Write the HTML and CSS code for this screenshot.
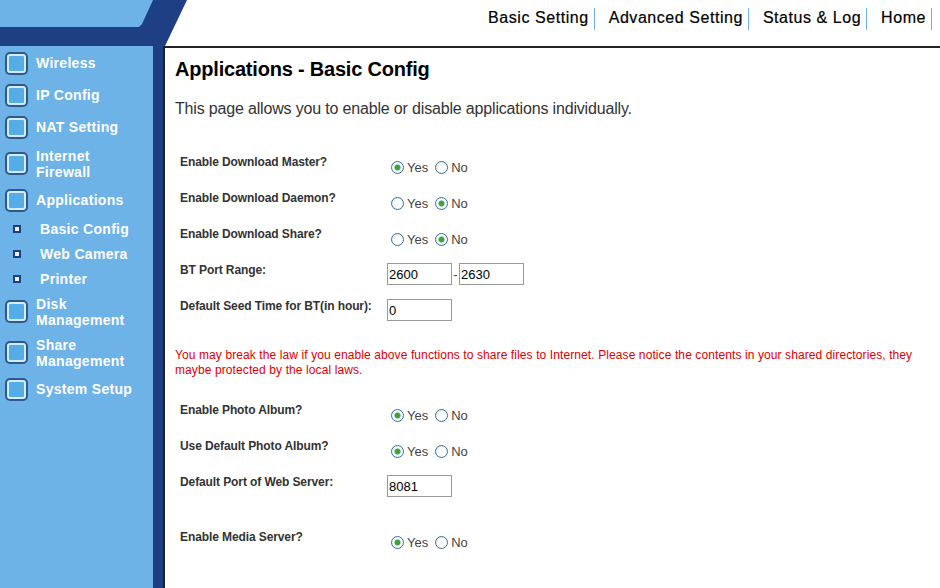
FILE: index.html
```html
<!DOCTYPE html>
<html lang="en">
<head>
    <title>Applications - Basic Config</title>
    <meta http-equiv="content-type" content="text/html;charset=UTF-8" />
    <link rel="stylesheet" href="styles.css">
</head>
<body>
    <div class="top-bar">
        <svg class="top-logo" width="187" height="46" viewBox="0 0 187 46">
            <polygon points="0,0 187,0 165,46 0,46" fill="#1f3f85"/>
            <polygon points="0,0 153,0 142,24 139,27 0,27" fill="#6db3e8"/>
        </svg>
        <ul class="top-menu">
            <li>Basic Setting</li>
            <li>Advanced Setting</li>
            <li>Status &amp; Log</li>
            <li>Home</li>
        </ul>
    </div>
    <div class="page">
        <div class="side-strip">
            <ul class="side-menu">
                <li class="side-item"><span class="side-icon"></span><span>Wireless</span></li>
                <li class="side-item"><span class="side-icon"></span><span>IP Config</span></li>
                <li class="side-item"><span class="side-icon"></span><span>NAT Setting</span></li>
                <li class="side-item tall"><span class="side-icon"></span><span>Internet<br>Firewall</span></li>
                <li class="side-item"><span class="side-icon"></span><span>Applications</span></li>
                <li class="side-sub"><span class="side-bullet"></span><span>Basic Config</span></li>
                <li class="side-sub"><span class="side-bullet"></span><span>Web Camera</span></li>
                <li class="side-sub"><span class="side-bullet"></span><span>Printer</span></li>
                <li class="side-item tall"><span class="side-icon"></span><span>Disk<br>Management</span></li>
                <li class="side-item tall"><span class="side-icon"></span><span>Share<br>Management</span></li>
                <li class="side-item"><span class="side-icon"></span><span>System Setup</span></li>
            </ul>
        </div>
        <div class="content">
            <h1>Applications - Basic Config</h1>
            <p class="intro">This page allows you to enable or disable applications individually.</p>

            <div class="form-group first-group">
                <div class="form-row">
                    <label>Enable Download Master?</label>
                    <div class="field"><input type="radio" name="dm" checked><span>Yes</span><input type="radio" name="dm"><span>No</span></div>
                </div>
                <div class="form-row">
                    <label>Enable Download Daemon?</label>
                    <div class="field"><input type="radio" name="dd"><span>Yes</span><input type="radio" name="dd" checked><span>No</span></div>
                </div>
                <div class="form-row">
                    <label>Enable Download Share?</label>
                    <div class="field"><input type="radio" name="ds"><span>Yes</span><input type="radio" name="ds" checked><span>No</span></div>
                </div>
                <div class="form-row">
                    <label>BT Port Range:</label>
                    <div class="field text-field"><input type="text" value="2600"><span class="dash">-</span><input type="text" value="2630"></div>
                </div>
                <div class="form-row">
                    <label>Default Seed Time for BT(in hour):</label>
                    <div class="field text-field"><input type="text" value="0"></div>
                </div>
            </div>

            <p class="warning">You may break the law if you enable above functions to share files to Internet. Please notice the contents in your shared directories, they maybe protected by the local laws.</p>

            <div class="form-group">
                <div class="form-row">
                    <label>Enable Photo Album?</label>
                    <div class="field"><input type="radio" name="pa" checked><span>Yes</span><input type="radio" name="pa"><span>No</span></div>
                </div>
                <div class="form-row">
                    <label>Use Default Photo Album?</label>
                    <div class="field"><input type="radio" name="up" checked><span>Yes</span><input type="radio" name="up"><span>No</span></div>
                </div>
                <div class="form-row">
                    <label>Default Port of Web Server:</label>
                    <div class="field text-field"><input type="text" value="8081"></div>
                </div>
                <div class="form-row media-row">
                    <label>Enable Media Server?</label>
                    <div class="field"><input type="radio" name="ms" checked><span>Yes</span><input type="radio" name="ms"><span>No</span></div>
                </div>
            </div>
        </div>
    </div>
</body>
</html>
```

FILE: styles.css
```css
html, body {
    margin: 0;
    height: 100%;
    overflow: hidden;
}

body {
    font-family: "Liberation Sans", Arial, sans-serif;
    background: #fff;
    color: #333;
}

ul {
    list-style: none;
    margin: 0;
    padding: 0;
}

.top-bar {
    height: 46px;
    display: flex;
    justify-content: space-between;
}

.top-logo {
    display: block;
}

.top-menu {
    display: flex;
    align-items: flex-start;
    padding-top: 8px;
    padding-right: 8px;
}

.top-menu li {
    height: 22px;
    line-height: 19px;
    font-size: 16px;
    color: #000;
    letter-spacing: 0.55px;
    -webkit-text-stroke: 0.2px #000;
    padding: 0 5px 0 14px;
    border-right: 1px solid #6db3e8;
}

.page {
    display: flex;
    height: 542px;
}

.side-strip {
    width: 153px;
    background: #6db3e8;
    border-right: 10px solid #1f3f85;
    flex-shrink: 0;
}

.side-menu {
    color: #fff;
    font-size: 14px;
    font-weight: bold;
    letter-spacing: 0.3px;
    padding-top: 1px;
}

.side-item {
    display: flex;
    align-items: center;
    min-height: 32px;
    line-height: 16px;
    padding-left: 5px;
}

.side-item.tall {
    min-height: 41px;
}

.side-icon {
    width: 15px;
    height: 15px;
    margin-left: 2px;
    margin-right: 10px;
    flex-shrink: 0;
    background: #55ade8;
    border: 2px solid #d5ecfa;
    border-radius: 3px;
    box-shadow: 0 0 0 2px #2a5a90;
}

.side-sub {
    display: flex;
    align-items: center;
    height: 25px;
    padding-left: 13px;
}

.side-bullet {
    width: 4px;
    height: 4px;
    margin-right: 19px;
    background: #e8f4fc;
    border: 2px solid #1f3f85;
    flex-shrink: 0;
}

.content {
    flex: 1;
    border-top: 2px solid #222;
    border-left: 2px solid #222;
    padding: 0 10px;
}

h1 {
    margin: 10px 0 0 0;
    font-size: 20px;
    line-height: 23px;
    letter-spacing: -0.2px;
    color: #000;
}

.intro {
    margin: 18px 0 0 0;
    font-size: 16px;
    line-height: 20px;
    letter-spacing: -0.17px;
}

.first-group {
    margin-top: 26px;
}

.form-row {
    display: flex;
    height: 36px;
    padding-left: 5px;
}

.form-row label {
    width: 207px;
    flex-shrink: 0;
    font-size: 12px;
    font-weight: bold;
    line-height: 16px;
    letter-spacing: -0.1px;
    padding-top: 9px;
}

.field {
    display: flex;
    align-items: center;
    height: 20px;
    padding-top: 12px;
    padding-left: 4px;
    font-size: 13px;
    color: #444;
}

.field input[type="radio"] {
    appearance: none;
    -webkit-appearance: none;
    width: 13px;
    height: 13px;
    margin: 0 3px 0 0;
    border: 1px solid #3a6f9e;
    border-radius: 50%;
    background: radial-gradient(circle at 60% 60%, #fff 40%, #dcdcd4 100%);
}

.field input[type="radio"]:checked {
    background: radial-gradient(circle, #3aa53a 0, #3aa53a 2.5px, #fff 3.5px, #eee 100%);
}

.field span {
    margin-right: 7px;
}

.text-field {
    padding-top: 10px;
    padding-left: 0;
    height: 22px;
}

.text-field input {
    box-sizing: border-box;
    width: 65px;
    height: 22px;
    margin: 0;
    padding: 0 1px;
    font-family: inherit;
    font-size: 13px;
    color: #000;
    border: 1px solid #999;
}

.field .dash {
    margin: 0;
    width: 7px;
    text-align: center;
}

.warning {
    margin: 23px 0 0 0;
    font-size: 12px;
    line-height: 15px;
    letter-spacing: 0.1px;
    color: #e00000;
}

.form-group {
    margin-top: 15px;
}

.first-group {
    margin-top: 26px;
}

.media-row {
    margin-top: 19px;
}
```
